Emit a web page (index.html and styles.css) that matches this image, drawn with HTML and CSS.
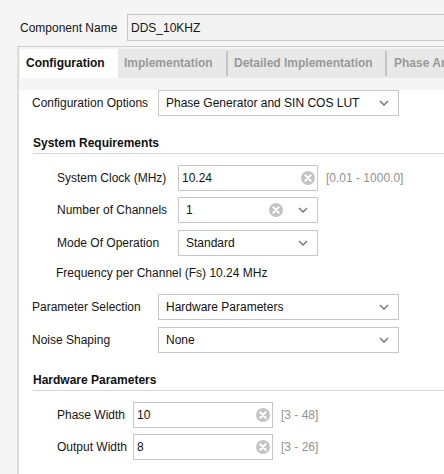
FILE: index.html
```html
<!DOCTYPE html>
<html>
<head>
<meta charset="utf-8">
<link rel="stylesheet" href="styles.css">
</head>
<body>
<div class="top">
  <span class="top-label">Component Name</span>
  <div class="name-input">DDS_10KHZ</div>
</div>
<div class="panel">
  <div class="tabs">
    <div class="tab tab-config active">Configuration</div>
    <div class="tab tab-impl">Implementation</div>
    <div class="sep"></div>
    <div class="tab tab-detail">Detailed Implementation</div>
    <div class="sep"></div>
    <div class="tab tab-phase">Phase Angle Increment/Offset Values</div>
  </div>
  <div class="content">
    <div class="row row-a">
      <span class="label w126">Configuration Options</span>
      <div class="field combo w241"><span>Phase Generator and SIN COS LUT</span>
        <svg class="chev" width="10" height="6" viewBox="0 0 10 6"><polyline points="1,1 5,5 9,1" fill="none" stroke="#7d7d7d" stroke-width="1.6"/></svg>
      </div>
    </div>

    <div class="head head-1">System Requirements</div>

    <div class="row sub row-b">
      <span class="label w121">System Clock (MHz)</span>
      <div class="field w140"><span>10.24</span>
        <svg class="clear" width="14" height="14" viewBox="0 0 14 14"><circle cx="7" cy="7" r="7" fill="#c4c4c4"/><path d="M4.3 4.3 L9.7 9.7 M9.7 4.3 L4.3 9.7" stroke="#fff" stroke-width="2" stroke-linecap="round"/></svg>
      </div>
      <span class="range">[0.01 - 1000.0]</span>
    </div>
    <div class="row sub row-c">
      <span class="label w121">Number of Channels</span>
      <div class="field combo w140"><span>1</span>
        <svg class="clear clear-combo" width="14" height="14" viewBox="0 0 14 14"><circle cx="7" cy="7" r="7" fill="#c4c4c4"/><path d="M4.3 4.3 L9.7 9.7 M9.7 4.3 L4.3 9.7" stroke="#fff" stroke-width="2" stroke-linecap="round"/></svg>
        <svg class="chev chev-after" width="10" height="6" viewBox="0 0 10 6"><polyline points="1,1 5,5 9,1" fill="none" stroke="#7d7d7d" stroke-width="1.6"/></svg>
      </div>
    </div>
    <div class="row sub row-d">
      <span class="label w121">Mode Of Operation</span>
      <div class="field combo w140"><span>Standard</span>
        <svg class="chev" width="10" height="6" viewBox="0 0 10 6"><polyline points="1,1 5,5 9,1" fill="none" stroke="#7d7d7d" stroke-width="1.6"/></svg>
      </div>
    </div>
    <div class="freq">Frequency per Channel (Fs) 10.24 MHz</div>

    <div class="row row-e">
      <span class="label w126">Parameter Selection</span>
      <div class="field combo w241"><span>Hardware Parameters</span>
        <svg class="chev" width="10" height="6" viewBox="0 0 10 6"><polyline points="1,1 5,5 9,1" fill="none" stroke="#7d7d7d" stroke-width="1.6"/></svg>
      </div>
    </div>
    <div class="row row-f">
      <span class="label w126">Noise Shaping</span>
      <div class="field combo w241"><span>None</span>
        <svg class="chev" width="10" height="6" viewBox="0 0 10 6"><polyline points="1,1 5,5 9,1" fill="none" stroke="#7d7d7d" stroke-width="1.6"/></svg>
      </div>
    </div>

    <div class="head head-2">Hardware Parameters</div>

    <div class="row sub row-g">
      <span class="label w76">Phase Width</span>
      <div class="field w140"><span>10</span>
        <svg class="clear" width="14" height="14" viewBox="0 0 14 14"><circle cx="7" cy="7" r="7" fill="#c4c4c4"/><path d="M4.3 4.3 L9.7 9.7 M9.7 4.3 L4.3 9.7" stroke="#fff" stroke-width="2" stroke-linecap="round"/></svg>
      </div>
      <span class="range">[3 - 48]</span>
    </div>
    <div class="row sub row-h">
      <span class="label w76">Output Width</span>
      <div class="field w140"><span>8</span>
        <svg class="clear" width="14" height="14" viewBox="0 0 14 14"><circle cx="7" cy="7" r="7" fill="#c4c4c4"/><path d="M4.3 4.3 L9.7 9.7 M9.7 4.3 L4.3 9.7" stroke="#fff" stroke-width="2" stroke-linecap="round"/></svg>
      </div>
      <span class="range">[3 - 26]</span>
    </div>
  </div>
</div>
</body>
</html>
```

FILE: styles.css
```css
html, body {
  margin: 0;
  padding: 0;
}
body {
  background: #f5f5f5;
  font-family: "Liberation Sans", Arial, sans-serif;
  font-size: 12px;
  color: #151515;
  width: 444px;
  height: 474px;
  overflow: hidden;
}
.top {
  display: flex;
  align-items: center;
  padding: 14px 0 0 20px;
  height: 27px;
}
.top-label {
  width: 107px;
  flex: none;
  white-space: nowrap;
}
.name-input {
  box-sizing: border-box;
  height: 27px;
  width: 340px;
  flex: none;
  border: 1px solid #c8c8c8;
  background: #f2f2f2;
  display: flex;
  align-items: center;
  padding-left: 3px;
}
.panel {
  margin: 5px 0 0 17px;
  border-left: 2px solid #dcdcdc;
  border-top: 1px solid #cdcdcd;
  width: 500px;
}
.tabs {
  display: flex;
  align-items: stretch;
  padding-top: 2px;
  background: #f3f3f3;
  height: 29px;
}
.tab {
  flex: none;
  box-sizing: border-box;
  height: 29px;
  line-height: 29px;
  padding-left: 6px;
  font-weight: bold;
  color: #9a9a9a;
  background: #e8e8e8;
  white-space: nowrap;
}
.tab-config { width: 98px; margin-left: 1px; }
.tab-impl { width: 108px; }
.tab-detail { width: 157px; }
.tab-phase { width: 160px; padding-left: 7px; }
.tab.active {
  background: #fff;
  color: #111;
}
.sep {
  flex: none;
  width: 2px;
  background: #c4c4c4;
  border-top: 2px solid #e8e8e8;
  border-bottom: 2px solid #e8e8e8;
  box-sizing: border-box;
}
.content {
  background: #fff;
  padding: 0 0 30px 13px;
}
.row {
  display: flex;
  align-items: center;
  height: 26px;
}
.sub { padding-left: 25px; }
.label {
  flex: none;
  white-space: nowrap;
}
.w126 { width: 126px; }
.w121 { width: 121px; }
.w76 { width: 76px; }
.field {
  box-sizing: border-box;
  height: 26px;
  border: 1px solid #c6c6c6;
  background: #fff;
  display: flex;
  align-items: center;
  padding-left: 3px;
  flex: none;
  color: #111;
}
.field.combo { padding-left: 7px; }
.w241 { width: 241px; }
.w140 { width: 140px; }
.field > span { flex: 1; white-space: nowrap; }
.clear { flex: none; margin-right: 2px; }
.clear-combo { margin-right: 15px; }
.chev { flex: none; margin-right: 9px; }
.range {
  margin-left: 8px;
  color: #929292;
  white-space: nowrap;
}
.head {
  font-weight: bold;
  line-height: 14px;
  padding-bottom: 3px;
  border-bottom: 1px solid #d4d4d4;
  margin-left: 1px;
  color: #111;
}
.row-a { margin-top: 12px; }
.head-1 { margin-top: 20px; }
.row-b { margin-top: 11px; }
.row-c { margin-top: 6px; }
.row-d { margin-top: 7px; }
.freq {
  margin-top: 10px;
  line-height: 14px;
  padding-left: 24px;
}
.row-e { margin-top: 14px; }
.row-f { margin-top: 7px; }
.head-2 { margin-top: 20px; }
.row-g { margin-top: 11px; }
.row-h { margin-top: 6px; }
```
